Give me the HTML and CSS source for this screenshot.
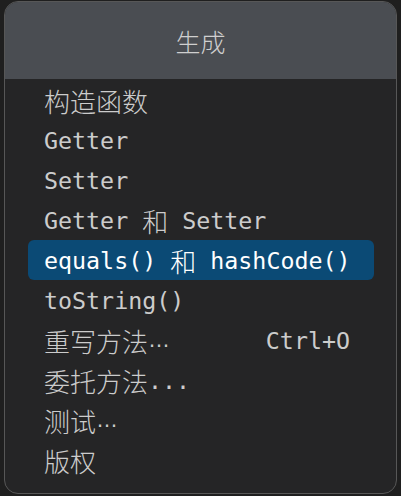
FILE: index.html
```html
<!DOCTYPE html>
<html lang="zh">
<head>
<meta charset="utf-8">
<link rel="stylesheet" href="styles.css">
</head>
<body>
<div class="popup">
  <div class="header">生成</div>
  <ul class="list">
    <li class="item"><span class="cjk">构造函数</span></li>
    <li class="item">Getter</li>
    <li class="item">Setter</li>
    <li class="item">Getter <span class="cjk">和</span> Setter</li>
    <li class="item active">equals() <span class="cjk">和</span> hashCode()</li>
    <li class="item">toString()</li>
    <li class="item"><span class="cjk">重写方法</span><span class="dots">…</span><span class="shortcut">Ctrl+O</span></li>
    <li class="item"><span class="cjk">委托方法</span>...</li>
    <li class="item"><span class="cjk">测试</span><span class="dots">…</span></li>
    <li class="item"><span class="cjk">版权</span></li>
  </ul>
</div>
</body>
</html>
```
FILE: styles.css
```css
html, body {
  margin: 0;
  padding: 0;
}
body {
  background: #1f1f1f;
  width: 401px;
  height: 496px;
  overflow: hidden;
  padding-top: 1px;
  box-sizing: border-box;
}
.popup {
  margin-left: 4px;
  width: 393px;
  height: 493px;
  box-sizing: border-box;
  border: 1px solid #575757;
  border-radius: 14px;
  background: #252526;
  overflow: hidden;
}
.header {
  height: 77px;
  background: #4a4d52;
  color: #cfcfcf;
  font-family: "Noto Sans CJK SC", sans-serif;
  font-size: 25px;
  font-weight: 300;
  display: flex;
  align-items: center;
  justify-content: center;
}
.list {
  list-style: none;
  margin: 0;
  padding: 1px 22px 0 23px;
}
.item {
  height: 40px;
  display: flex;
  align-items: center;
  padding: 0 24px 0 16px;
  border-radius: 6px;
  color: #cccccc;
  font-family: "DejaVu Sans Mono", monospace;
  font-size: 23.3px;
  white-space: pre;
}
.item.active {
  background: #0b4a75;
  color: #ffffff;
}
.cjk {
  font-family: "Noto Sans CJK SC", sans-serif;
  font-size: 26px;
  font-weight: 300;
}
.dots {
  font-family: "Liberation Sans", sans-serif;
  font-size: 22px;
}
.shortcut {
  margin-left: auto;
}
```
